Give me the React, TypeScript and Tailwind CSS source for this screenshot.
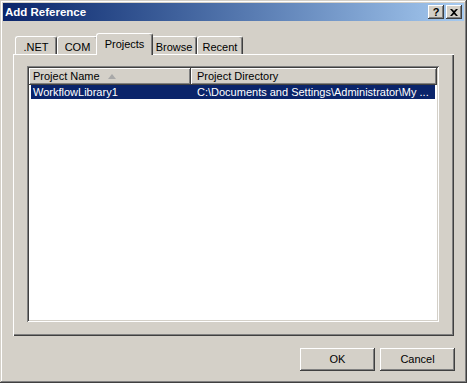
const font = { fontFamily: '"Liberation Sans", Arial, sans-serif' }

const raised = 'shadow-[inset_-1px_-1px_#404040,inset_1px_1px_#ffffff,inset_-2px_-2px_#808080,inset_2px_2px_#d4d0c8]'

const tabs = [
  { label: '.NET', w: 'w-[42px]' },
  { label: 'COM', w: 'w-[41px]' },
  { label: 'Projects', w: 'w-[57px]', active: true },
  { label: 'Browse', w: 'w-[46px]' },
  { label: 'Recent', w: 'w-[46px]' },
]

function TitleButton({ children }: { children: React.ReactNode }) {
  return (
    <div className={`w-[16px] h-[14px] bg-[#d4d0c8] flex items-center justify-center ${raised}`}>
      {children}
    </div>
  )
}

export default function App() {
  return (
    <div className="w-[467px] h-[383px] bg-[#d4d0c8] p-[3px] flex flex-col text-[11px] text-black shadow-[inset_-1px_-1px_#404040,inset_1px_1px_#d4d0c8,inset_-2px_-2px_#808080,inset_2px_2px_#ffffff]" style={font}>
      {/* title bar */}
      <div className="h-[18px] flex items-center pl-[2px] pr-[2px] bg-gradient-to-r from-[#0a246a] to-[#a6caf0]">
        <span className="text-white font-bold text-[11.5px] leading-none mt-[1px]">Add Reference</span>
        <div className="ml-auto flex gap-[2px]">
          <TitleButton>
            <span className="font-bold text-[11px] leading-none mt-[1px]">?</span>
          </TitleButton>
          <TitleButton>
            <svg width="8" height="7" viewBox="0 0 8 7">
              <path d="M0 0h2l2 2 2-2h2L5 3.5 8 7H6L4 5 2 7H0l3-3.5z" fill="#000" />
            </svg>
          </TitleButton>
        </div>
      </div>

      <div className="pl-[10px] pt-[12px]">
        {/* tabs */}
        <div className="flex items-end h-[21px] pl-[2px]">
          {tabs.map(t =>
            t.active ? (
              <div key={t.label} className={`${t.w} h-[22px] -mx-[2px] -mb-[1px] relative z-10 bg-[#d4d0c8] border-l border-t border-white border-r border-r-[#404040] rounded-t-[3px] shadow-[inset_-1px_0_#808080] flex justify-center pt-[2px]`}>
                {t.label}
              </div>
            ) : (
              <div key={t.label} className={`${t.w} h-[18px] bg-[#d4d0c8] border-l border-t border-white border-r border-r-[#404040] rounded-t-[3px] shadow-[inset_-1px_0_#808080] flex justify-center pt-[2px]`}>
                {t.label}
              </div>
            )
          )}
        </div>

        {/* panel */}
        <div className="w-[441px] h-[282px] pl-[14px] pt-[12px] shadow-[inset_1px_1px_#ffffff,inset_-1px_-1px_#404040,inset_-2px_-2px_#808080]">
          <div className="w-[412px] h-[256px] bg-white p-[2px] shadow-[inset_1px_1px_#808080,inset_-1px_-1px_#ffffff,inset_2px_2px_#404040,inset_-2px_-2px_#d4d0c8]">
            <div className="flex h-[17px]">
              <div className={`w-[162px] bg-[#d4d0c8] flex items-center pl-[4px] ${raised}`}>
                <span>Project Name</span>
                <svg className="ml-[8px]" width="8" height="5" viewBox="0 0 8 5">
                  <path d="M4 0 L8 5 H0 Z" fill="#a8a8a8" />
                </svg>
              </div>
              <div className={`flex-1 bg-[#d4d0c8] flex items-center pl-[6px] ${raised}`}>
                <span>Project Directory</span>
              </div>
            </div>
            <div className="flex h-[14px] items-center text-white">
              <div className="w-[162px] pl-[2px] h-full">
                <div className="bg-[#0a246a] h-full flex items-center pl-[2px]">WorkflowLibrary1</div>
              </div>
              <div className="flex-1 h-full bg-[#0a246a] flex items-center pl-[6px] mr-[2px]">
                C:\Documents and Settings\Administrator\My ...
              </div>
            </div>
          </div>
        </div>
      </div>

      {/* buttons */}
      <div className="flex justify-end gap-[5px] mt-[12px] pr-[9px]">
        <button className={`w-[75px] h-[23px] bg-[#d4d0c8] ${raised}`}>OK</button>
        <button className={`w-[75px] h-[23px] bg-[#d4d0c8] ${raised}`}>Cancel</button>
      </div>
    </div>
  )
}
